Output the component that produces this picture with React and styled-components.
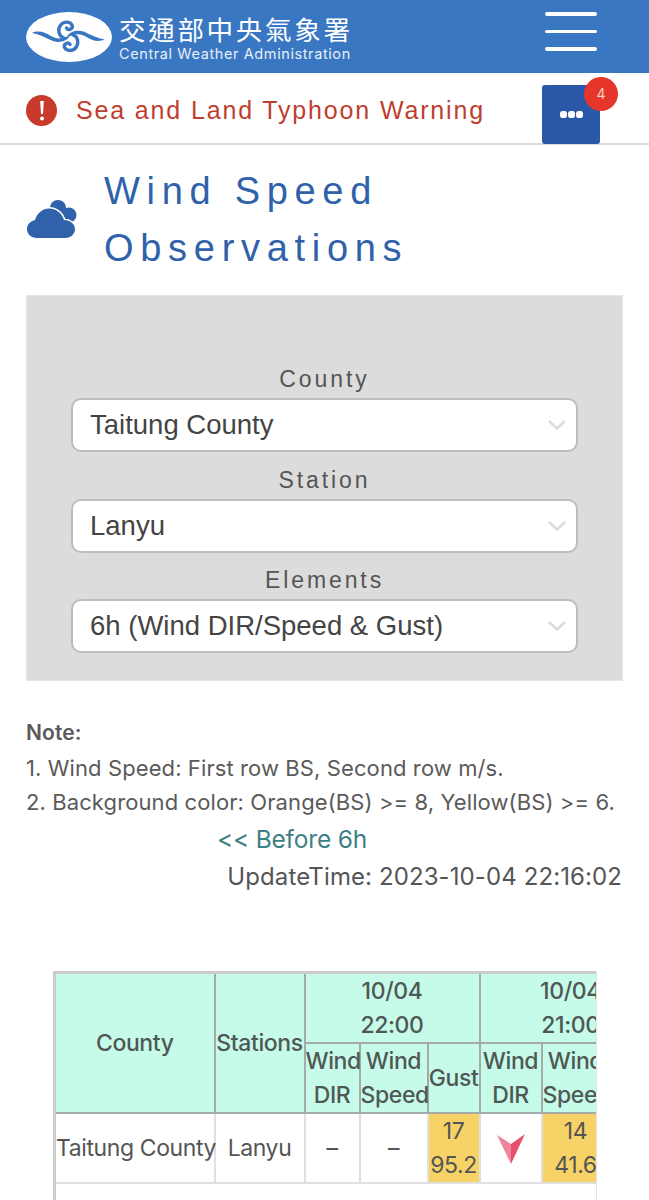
import React from "react";
import styled, { createGlobalStyle } from "styled-components";

const Global = createGlobalStyle`
  html, body { margin: 0; padding: 0; background: #fff; }
  body { font-family: Inter, "Noto Sans CJK TC", sans-serif; color: #555; height: 1200px; overflow: hidden; }
  * { box-sizing: border-box; }
`;

const Page = styled.div`width: 649px; height: 1200px; overflow: hidden;`;

const Header = styled.header`
  height: 73px; background: #3a77c2; display: flex; align-items: center;
  justify-content: space-between; padding: 0 52px 0 26px;
`;
const Brand = styled.div`display: flex; align-items: center; gap: 7px;`;
const BrandText = styled.div`display: flex; flex-direction: column; color: #fff; margin-top: 2px;`;
const BrandZh = styled.div`
  font-family: "Noto Sans CJK TC", sans-serif; font-size: 26.5px; line-height: 30px; letter-spacing: 2.7px; white-space: nowrap;
`;
const BrandEn = styled.div`
  font-family: Inter, sans-serif; font-size: 14.5px; line-height: 17px; letter-spacing: 0.6px; white-space: nowrap; color: #e6eff9; margin-top: 1px;
`;
const Burger = styled.div`display: flex; flex-direction: column; gap: 14px; width: 52px; margin-bottom: 10px;`;
const BurgerLine = styled.span`display: block; height: 3.5px; background: #fff; border-radius: 2px;`;

const AlertBar = styled.div`
  height: 72px; border-bottom: 2px solid #dcdcdc; display: flex; align-items: center;
  padding: 0 49px 0 26px; justify-content: space-between;
`;
const AlertLeft = styled.div`display: flex; align-items: center; gap: 19px; margin-top: 5px;`;
const AlertIcon = styled.div`
  width: 31px; height: 31px; border-radius: 50%; background: #c83a2b; color: #fff;
  display: flex; align-items: center; justify-content: center;
`;
const AlertText = styled.div`
  font-family: "Liberation Sans", sans-serif; font-size: 25px; letter-spacing: 1.85px; color: #bf3e30; white-space: nowrap;
`;
const MoreButton = styled.div`
  position: relative; width: 58px; height: 59px; margin-top: 12px; background: #2958a8; border-radius: 3px;
  display: flex; align-items: center; justify-content: center; gap: 1px;
`;
const Dot = styled.span`width: 7px; height: 7px; border-radius: 2.5px; background: #fff;`;
const Badge = styled.div`
  position: absolute; top: -8px; right: -18px; width: 34px; height: 34px; border-radius: 50%;
  background: #e6352a; color: #f6d0c8; font-size: 14px; display: flex; align-items: center; justify-content: center;
`;

const TitleRow = styled.div`display: flex; align-items: center; padding: 18px 0 0 27px; gap: 25px;`;
const Title = styled.h1`
  margin: 0; font-family: "Liberation Sans", sans-serif; font-weight: 400; font-size: 38px; line-height: 57px;
  letter-spacing: 6.7px; color: #2f62aa;
`;

const FormPanel = styled.div`
  margin: 18px 26px 0; width: 597px; height: 386px; background: #dcdcdc; border: 1px solid #e6e6e6;
  padding: 64px 44px 0; display: flex; flex-direction: column; align-items: center;
`;
const Label = styled.div`
  font-size: 23px; line-height: 38px; height: 38px; letter-spacing: 2.9px; color: #555; font-family: "Liberation Sans", sans-serif;
`;
const Select = styled.div`
  width: 100%; height: 54px; background: #fff; border: 2px solid #bdbdbd; border-radius: 10px;
  display: flex; align-items: center; justify-content: space-between; padding: 0 9px 0 17px;
  font-family: "Liberation Sans", sans-serif; font-size: 27.5px; color: #444; margin-bottom: 8.5px; white-space: nowrap;
`;

const Notes = styled.div`padding: 35px 26px 1.5px; font-size: 22px; line-height: 34.5px; color: #5a5a5a; letter-spacing: 0.1px; white-space: nowrap;`;
const NoteHead = styled.div`font-weight: 600; font-size: 21px;`;
const LinkRow = styled.div`padding-left: 217px; font-size: 24.5px; line-height: 37px; color: #3c7f85; letter-spacing: -0.2px;`;
const UpdateRow = styled.div`text-align: right; padding-right: 27px; font-size: 24px; line-height: 38px; color: #555; letter-spacing: 0.1px;`;

const TableClip = styled.div`margin: 75px 0 0 53px; width: 544px; height: 240px; overflow: hidden; border-right: 1px solid #e4e4e4;`;
const Table = styled.table`
  border-collapse: collapse; table-layout: fixed; width: 607px;
  font-family: Inter, sans-serif; font-size: 23px; letter-spacing: -0.4px; color: #555;
  border-top: 3px solid #ccc; border-left: 3px solid #ccc;
`;
const Th = styled.th`
  background: #c6fbe9; border: 2.5px solid #a3aca9; font-weight: 500; padding: 0; text-align: center;
  line-height: 34px; color: #505855; white-space: nowrap;
`;
const Td = styled.td`
  background: ${p => p.$warn ? "#f6d267" : "#fff"}; border: 2.5px solid #e0e0e0; padding: 0; text-align: center;
  line-height: 34px; height: 70px; white-space: nowrap; font-weight: 400; color: #555;
`;
const EmptyRow = styled.tr`height: 40px;`;

const Logo = () => {
  const half = (
    <>
      <path d="M6 22 C12 19 19 21 25 25 C30 28 35 28 39 26 L44 25 C40 31 33 32 27 30 C20 27 13 23 6 22 Z" fill="#3a77c2" />
      <path d="M38 27 C32 25 32 18 34 15 C37 10 44 10 46 14 C47.5 18 42 20 40.5 17" fill="none" stroke="#3a77c2" strokeWidth="3.4" strokeLinecap="round" />
    </>
  );
  return (
    <svg width="86" height="52" viewBox="0 0 86 52" aria-hidden="true">
      <ellipse cx="43" cy="26" rx="43" ry="25" fill="#fff" />
      {half}
      <g transform="rotate(180 42.3 25.3)">{half}</g>
    </svg>
  );
};

const CloudIcon = () => (
  <svg width="52" height="40" viewBox="0 0 52 40" aria-hidden="true">
    <circle cx="31" cy="8" r="8" fill="#2f62aa" />
    <circle cx="42" cy="15" r="7.5" fill="#2f62aa" />
    <path d="M10 38 C4 38 0 34 0 29 C0 24 4 21 8 20 C10 13 16 8.5 22 8.5 C29 8.5 35 13 37 20 C43 20 48 24 48 29 C48 34 44 38 38 38 Z" fill="#2f62aa" stroke="#fff" strokeWidth="3" paintOrder="stroke" />
  </svg>
);

const Chevron = () => (
  <svg width="20" height="12" viewBox="0 0 20 12" aria-hidden="true">
    <path d="M2 2 L10 9.5 L18 2" fill="none" stroke="#dcdcdc" strokeWidth="2.6" />
  </svg>
);

const Arrow = () => (
  <svg width="28" height="32" viewBox="0 0 28 32" style={{ verticalAlign: "middle" }} aria-hidden="true">
    <path d="M0 2 L14 11 L14 31 Z" fill="#f0849c" />
    <path d="M28 1 L14 11 L14 31 Z" fill="#e8506f" />
  </svg>
);

const fields = [
  ["County", "Taitung County"],
  ["Station", "Lanyu"],
  ["Elements", "6h (Wind DIR/Speed & Gust)"],
];

export default function App() {
  return (
    <Page>
      <Global />
      <Header>
        <Brand>
          <Logo />
          <BrandText>
            <BrandZh>交通部中央氣象署</BrandZh>
            <BrandEn>Central Weather Administration</BrandEn>
          </BrandText>
        </Brand>
        <Burger><BurgerLine /><BurgerLine /><BurgerLine /></Burger>
      </Header>
      <AlertBar>
        <AlertLeft>
          <AlertIcon>
            <svg width="6" height="22" viewBox="0 0 6 22" aria-hidden="true">
              <path d="M1.2 1 H4.8 L4 14 H2 Z" fill="#fff" />
              <circle cx="3" cy="18.5" r="2" fill="#fff" />
            </svg>
          </AlertIcon>
          <AlertText>Sea and Land Typhoon Warning</AlertText>
        </AlertLeft>
        <MoreButton>
          <Dot /><Dot /><Dot />
          <Badge>4</Badge>
        </MoreButton>
      </AlertBar>
      <TitleRow>
        <CloudIcon />
        <Title>Wind Speed<br />Observations</Title>
      </TitleRow>
      <FormPanel>
        {fields.map(([label, value]) => (
          <React.Fragment key={label}>
            <Label>{label}</Label>
            <Select>{value}<Chevron /></Select>
          </React.Fragment>
        ))}
      </FormPanel>
      <Notes>
        <NoteHead>Note:</NoteHead>
        <div>1. Wind Speed: First row BS, Second row m/s.</div>
        <div>2. Background color: Orange(BS) &gt;= 8, Yellow(BS) &gt;= 6.</div>
      </Notes>
      <LinkRow>&lt;&lt; Before 6h</LinkRow>
      <UpdateRow>UpdateTime: 2023-10-04 22:16:02</UpdateRow>
      <TableClip>
        <Table>
          <colgroup>
            <col style={{ width: 160 }} /><col style={{ width: 90 }} />
            <col style={{ width: 55 }} /><col style={{ width: 68 }} /><col style={{ width: 52 }} />
            <col style={{ width: 62 }} /><col style={{ width: 68 }} /><col style={{ width: 52 }} />
          </colgroup>
          <thead>
            <tr>
              <Th rowSpan={2}>County</Th>
              <Th rowSpan={2}>Stations</Th>
              <Th colSpan={3}>10/04<br />22:00</Th>
              <Th colSpan={3}>10/04<br />21:00</Th>
            </tr>
            <tr>
              <Th>Wind<br />DIR</Th>
              <Th>Wind<br />Speed</Th>
              <Th>Gust</Th>
              <Th>Wind<br />DIR</Th>
              <Th>Wind<br />Speed</Th>
              <Th>Gust</Th>
            </tr>
          </thead>
          <tbody>
            <tr>
              <Td>Taitung County</Td>
              <Td>Lanyu</Td>
              <Td>–</Td>
              <Td>–</Td>
              <Td $warn>17<br />95.2</Td>
              <Td><Arrow /></Td>
              <Td $warn>14<br />41.6</Td>
              <Td $warn>18<br />98.2</Td>
            </tr>
            <EmptyRow><Td colSpan={8} /></EmptyRow>
          </tbody>
        </Table>
      </TableClip>
    </Page>
  );
}
